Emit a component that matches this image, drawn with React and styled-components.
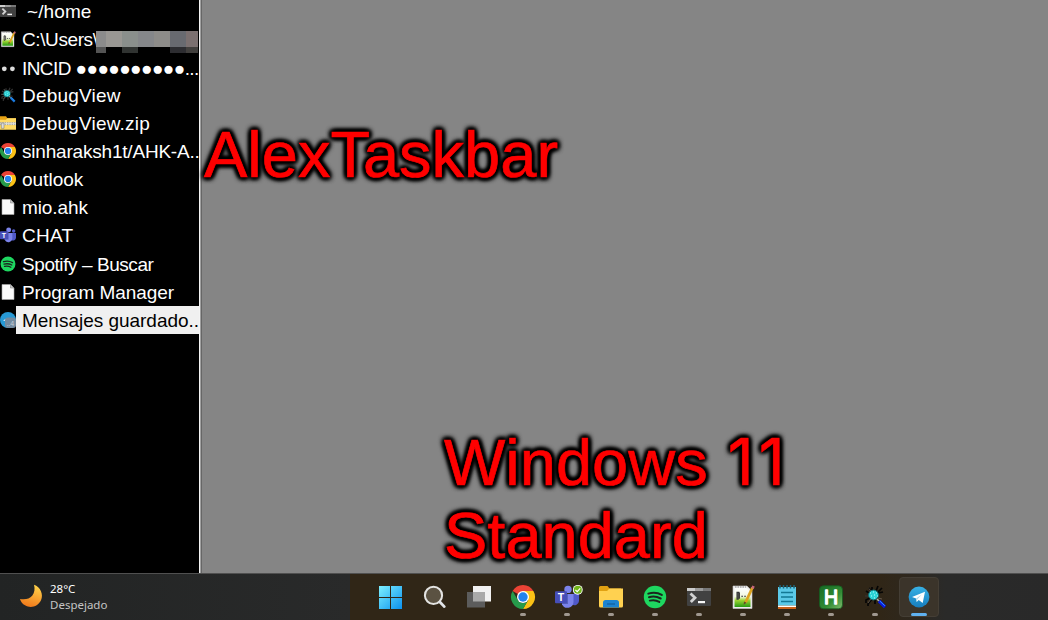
import React from "react";
import styled, { createGlobalStyle } from "styled-components";

const GlobalStyle = createGlobalStyle`
  *, *::before, *::after { box-sizing: border-box; }
  body { margin: 0; background: #858585; overflow: hidden; }
`;

const Desktop = styled.div`
  width: 1048px;
  height: 620px;
  display: flex;
  flex-direction: column;
  overflow: hidden;
  font-family: "Liberation Sans", Arial, sans-serif;
`;

const Workspace = styled.main`
  height: 573px;
  display: flex;
  overflow: hidden;
`;

const Sidebar = styled.nav`
  width: 202px;
  flex: none;
  background: #000;
  border-right: 1px solid #666;
  box-shadow: inset -1px 0 #a0a0a0, inset -2px 0 #f4f4f4;
  padding-right: 2px;
  overflow: hidden;
`;

const WindowList = styled.div`
  margin-top: -3px;
`;

const WindowRow = styled.div`
  height: ${(p) => p.$height || 28}px;
  display: flex;
  align-items: flex-start;
`;

const RowIcon = styled.span`
  width: 16px;
  height: 28px;
  flex: none;
  display: flex;
  align-items: center;
`;

const RowTitle = styled.span`
  flex: 1;
  min-width: 0;
  height: 28px;
  padding-left: ${(p) => p.$indent || 6}px;
  display: flex;
  overflow: hidden;
  white-space: pre;
  font-size: 19px;
  line-height: 29px;
  letter-spacing: ${(p) => p.$tracking || 0}px;
  color: ${(p) => (p.$active ? "#000" : "#fff")};
  background: ${(p) => (p.$active ? "#f0f0f0" : "transparent")};
`;

const Mosaic = styled.span`
  margin-top: 6px;
  margin-left: -2px;
  display: grid;
  grid-template-columns: 10px 16px 16px 16px 16px 16px 12px;
  grid-template-rows: 16px 7px;
  flex: none;
`;

const Tile = styled.span`
  background: ${(p) => p.$color};
`;

const Canvas = styled.section`
  flex: 1;
  min-width: 0;
  background: #858585;
  display: flex;
  flex-direction: column;
  justify-content: space-between;
  padding: 118px 0 1px 2px;
`;

const Caption = styled.h1`
  margin: 0 0 0 ${(p) => p.$left || 0}px;
  width: 380px;
  color: #f00;
  font-size: 65px;
  font-weight: 400;
  line-height: 73px;
  -webkit-text-stroke: 0.7px #f00;
  text-shadow:
    2px 2px 4px #000, -2px 2px 4px #000, 2px -2px 4px #000, -2px -2px 4px #000,
    2px 0 4px #000, -2px 0 4px #000, 0 2px 4px #000, 0 -2px 4px #000,
    0 0 7px #000;
  white-space: nowrap;
`;

const Numeral = styled.span`
  margin-left: 2px;
  font-family: Inter, "Liberation Sans", sans-serif;
  font-size: 64px;
  line-height: 1;
  letter-spacing: 5px;
`;

const Taskbar = styled.footer`
  height: 47px;
  flex: none;
  display: flex;
  border-top: 1px solid #505050;
  background: linear-gradient(90deg, #222424 0, #292a2a 350px, #302617 350px, #302617 880px, #2e281f 915px, #2a2a29 945px, #292929 1048px);
`;

const Weather = styled.div`
  width: 371px;
  flex: none;
  display: flex;
  padding: 7px 0 0 19px;
`;

const WeatherText = styled.div`
  margin-left: 7px;
  font-family: "Noto Sans", sans-serif;
  font-size: 11.5px;
  line-height: 16px;
  color: #c4c4c4;
`;

const Temperature = styled.div`
  color: #fff;
  font-size: 11.5px;
`;

const MoonSlot = styled.div`
  padding-top: 3px;
`;

const Apps = styled.div`
  display: flex;
  gap: 4px;
  padding-top: 3px;
`;

const AppButton = styled.button`
  width: 40px;
  height: 40px;
  padding: 7px 0 0;
  display: flex;
  flex-direction: column;
  align-items: center;
  justify-content: space-between;
  border: 1px solid ${(p) => (p.$active ? "#443e35" : "transparent")};
  border-radius: 4px;
  background: ${(p) => (p.$active ? "#3b342a" : "transparent")};
`;

const Indicator = styled.span`
  width: ${(p) => (p.$active ? 16 : 6)}px;
  height: 3px;
  flex: none;
  border-radius: 2px;
  background: ${(p) => (p.$hidden ? "transparent" : p.$active ? "#60b1f0" : "#a09890")};
`;

const Icon = styled.svg.attrs((p) => ({ viewBox: p.viewBox || "0 0 24 24" }))`
  width: ${(p) => p.$size}px;
  height: ${(p) => p.$size}px;
  flex: none;
  display: block;
  overflow: visible;
`;

const Terminal = ({ size }) => (
  <Icon $size={size}>
    <path d="M0 3h24v17a1 1 0 0 1-1 1H1a1 1 0 0 1-1-1z" fill="#414141" />
    <path d="M0 3h24v3H0z" fill="#777" />
    <path d="M0 3h8v3H0z" fill="#ccc" />
    <path d="M8 3h8v3H8z" fill="#9b9b9b" />
    <path d="M3.5 8.5l4.5 4.2L3.8 17" fill="none" stroke="#d2d2d2" strokeWidth="2.8" />
    <path d="M11 16h7v2.2h-7z" fill="#f6f6f6" />
  </Icon>
);

const NotepadPlus = ({ size }) => (
  <Icon $size={size}>
    <defs>
      <linearGradient id="npp" x1="0" y1="0" x2="0" y2="1">
        <stop offset="0" stopColor="#fff" />
        <stop offset=".45" stopColor="#f1f8df" />
        <stop offset=".65" stopColor="#9dd534" />
        <stop offset="1" stopColor="#269a12" />
      </linearGradient>
    </defs>
    <path d="M2 1h14l5 5v17.5H2z" fill="#eee" stroke="#ccc" strokeWidth=".6" />
    <path d="M3.5 3h12l4 4v15h-16z" fill="url(#npp)" />
    <path d="M4 2h11" stroke="#888" strokeDasharray="1.5 1" />
    <path d="M6 7.2h1.2v7H6zM8.4 7.6v6.2M7 7.4h1.4M10.3 11.2h1.7M13.2 11.2h1.7" fill="none" stroke="#333" strokeWidth="1.1" />
    <path d="M21.5 2.5l-7 15" stroke="#dda320" strokeWidth="2.8" />
    <path d="M22.5 1l-1 2.5" stroke="#c5667c" strokeWidth="2.6" />
    <path d="M15.6 17.8l-2.6-1.2-.4 3.2z" fill="#654c25" />
  </Icon>
);

const TwoDots = ({ size }) => (
  <Icon $size={size} viewBox="0 0 16 16">
    <circle cx="4.3" cy="8.8" r="2.4" fill="#ddd" />
    <circle cx="12.4" cy="8.8" r="2.4" fill="#ddd" />
  </Icon>
);

const Debug = ({ size }) => (
  <Icon $size={size}>
    <path d="M9 8L6 3M9 6V2M13 6l2-5M15 7l4-4M6 8L3 6M6 11H2M7 13l-4 2v3M9 14l-4 5v2M12 15v4M15 8l5-1" fill="none" stroke={size > 18 ? "#050505" : "#343434"} strokeWidth="1.7" />
    <path d="M9 8L6 3.5M6 11H2M8 14l-3 4M15 13l4 1" fill="none" stroke="#7a6e62" strokeWidth=".7" />
    <circle cx="10.5" cy="10" r="4.9" fill="#2cd3d6" stroke="#126e75" />
    <path d="M7 8h1m2-1h1m2 1h1m-6 3h1m2-1h1m2 1h1m-4 2h1" stroke="#b6ffff" strokeWidth="1.2" />
    <path d="M14 14l2 2" stroke="#b7b7ad" strokeWidth="1.6" />
    <path d="M16 16l6 6" stroke={size > 18 ? "#091adf" : "#1673d8"} strokeWidth="3.4" />
    <path d="M16.6 15.8l5.2 5" stroke="#36a6ff" strokeWidth=".9" />
  </Icon>
);

const ZipFolder = ({ size }) => (
  <Icon $size={size}>
    <path d="M0 2h9l2 3h13v5H0z" fill="#e8a315" />
    <path d="M0 7h9l2-2h13v17H0z" fill="#ffda65" />
    <path d="M0 13h24" stroke="#e0e0dc" strokeWidth="4" />
    <path d="M0 11.6h24M0 14.5h24" stroke="#8d8b80" strokeDasharray="2 1.5" />
    <path d="M2 12h4v8H2z" fill="#ddd" stroke="#77756d" strokeWidth=".8" />
  </Icon>
);

const Chrome = ({ size }) => (
  <Icon $size={size}>
    <path d="M12 12L1.6 6A12 12 0 0 1 22.4 6z" fill="#ea4335" />
    <path d="M12 6h10.4A12 12 0 0 1 12 24l5.2-9z" fill="#fbc116" />
    <path d="M1.6 6l5.2 9A6 6 0 0 0 17.2 15L12 24A12 12 0 0 1 1.6 6z" fill="#269b4b" />
    <circle cx="12" cy="12" r="6" fill="#fff" />
    <circle cx="12" cy="12" r="4.7" fill="#2483ee" />
  </Icon>
);

const Page = ({ size }) => (
  <Icon $size={size} viewBox="0 0 16 16">
    <path d="M2 .5h8.5L14 4v11.5H2z" fill="#fafafa" stroke="#aaa" strokeWidth=".6" />
    <path d="M10.5.5V4H14z" fill="#c8c8c8" stroke="#777" strokeWidth=".5" />
  </Icon>
);

const Teams = ({ size, badge }) => (
  <Icon $size={size}>
    <circle cx="20.5" cy="6" r="2.6" fill="#5059c9" />
    <circle cx="13" cy="4.4" r="3.7" fill="#7b83eb" />
    <path d="M17 9h7v7a4.5 4.5 0 0 1-7 3.5z" fill="#5059c9" />
    <path d="M7 9h11.5v8a6 6 0 0 1-11.5 2.2z" fill="#7b83eb" />
    <path d="M7 9h6v10H7z" fill="#5962bc" />
    <rect x="0" y="6.2" width="12" height="12" rx="1" fill="#464eb8" />
    <text x="6" y="15.9" fill="#fff" fontFamily="Liberation Sans, sans-serif" fontWeight="700" fontSize="10.5" textAnchor="middle">T</text>
    {badge && (
      <g>
        <circle cx="22.8" cy="4.8" r="4.9" fill="#fff" />
        <circle cx="22.8" cy="4.8" r="4" fill="#72b51b" />
        <path d="M20.4 4.8l1.8 1.8 3-3.3" fill="none" stroke="#fff" strokeWidth="1.2" />
      </g>
    )}
  </Icon>
);

const Spotify = ({ size }) => (
  <Icon $size={size}>
    <circle cx="12" cy="12" r="11.2" fill="#1ed760" />
    <path d="M5.3 8.6c4.5-1.4 9.6-1 13.5 1.3M6 12.2c4-1.1 8-.7 11.7 1.3M6.8 15.6c3.4-.8 6.6-.5 9.5 1.3" fill="none" stroke="#1b261d" strokeWidth="2" strokeLinecap="round" />
  </Icon>
);

const TelegramBadge = ({ size }) => (
  <Icon $size={size} viewBox="0 0 16 16">
    <circle cx="8" cy="8" r="8" fill="#2799d5" />
    <path d="M3 8.6l3.5-2v2.6z" fill="#eef8ff" />
    <rect x="5" y="5.5" width="11" height="10.5" rx="3" fill="#738ba0" />
    <text x="6.4" y="14" fill="#c4ced6" fontFamily="Liberation Sans, sans-serif" fontSize="7">..4</text>
  </Icon>
);

const Start = ({ size }) => (
  <Icon $size={size}>
    <defs>
      <linearGradient id="start" x1="0" y1="1" x2="23" y2="24" gradientUnits="userSpaceOnUse">
        <stop stopColor="#7df0ff" />
        <stop offset="1" stopColor="#0b91ef" />
      </linearGradient>
    </defs>
    <path d="M0 1h11v11H0zM12 1h11v11H12zM0 13h11v11H0zM12 13h11v11H12z" fill="url(#start)" />
  </Icon>
);

const Search = ({ size }) => (
  <Icon $size={size}>
    <circle cx="10.5" cy="10.4" r="8.6" fill="#5b5242" stroke="#e4e4e2" strokeWidth="2" />
    <path d="M16.9 17l4.4 4.6" stroke="#e2e4e8" strokeWidth="2.8" strokeLinecap="round" />
  </Icon>
);

const TaskView = ({ size }) => (
  <Icon $size={size}>
    <path d="M6 1h18v15.5H6z" fill="#f1f1f1" />
    <path d="M0 7h18v15.5H0z" fill="#5c5c5c" />
    <path d="M6 7h12v9.5H6z" fill="#a9a9a9" />
  </Icon>
);

const Explorer = ({ size }) => (
  <Icon $size={size}>
    <path d="M0 2.5A1.5 1.5 0 0 1 1.5 1h7l2 2.5H22V9H0z" fill="#e1a112" />
    <path d="M0 6h8l2.5-2.4H24V21a1.5 1.5 0 0 1-1.5 1.5h-21A1.5 1.5 0 0 1 0 21z" fill="#ffd150" />
    <path d="M4 22.5v-5A2.5 2.5 0 0 1 6.5 15h11a2.5 2.5 0 0 1 2.5 2.5v5z" fill="#1c83d0" />
    <path d="M8 19h8" stroke="#115e9c" strokeWidth="1.2" />
  </Icon>
);

const Notes = ({ size }) => (
  <Icon $size={size}>
    <path d="M3 19h18v5H3z" fill="#c96119" />
    <path d="M3 20.5h18v1.5H3z" fill="#fff" />
    <path d="M3 2h18v18.5H3z" fill="#5bc9e7" />
    <path d="M5 0v3.5M8.5 0v3.5M12 0v3.5M15.5 0v3.5M19 0v3.5" stroke="#1c6578" strokeWidth="1.5" />
    <path d="M6 7.5h12M6 12h12M6 16.5h12" stroke="#137894" strokeWidth="1.6" />
  </Icon>
);

const AutoHotkey = ({ size }) => (
  <Icon $size={size}>
    <defs>
      <linearGradient id="ahk" x1="0" y1="0" x2="1" y2="1">
        <stop stopColor="#176b25" />
        <stop offset=".6" stopColor="#318b34" />
        <stop offset="1" stopColor="#80bc6d" />
      </linearGradient>
    </defs>
    <rect x=".5" y=".8" width="23" height="23" rx="4" fill="url(#ahk)" stroke="#145d20" strokeWidth=".8" />
    <text x="12" y="19.3" fill="#fff" stroke="#fff" strokeWidth="1.3" strokeLinejoin="round" fontFamily="Liberation Sans, sans-serif" fontSize="19.5" textAnchor="middle">H</text>
  </Icon>
);

const Telegram = ({ size }) => (
  <Icon $size={size}>
    <defs>
      <linearGradient id="telegram" x1="0" y1="0" x2="0" y2="1">
        <stop stopColor="#38b1e5" />
        <stop offset="1" stopColor="#177dbe" />
      </linearGradient>
    </defs>
    <circle cx="12" cy="12" r="10.4" fill="url(#telegram)" />
    <path d="M5 12l13-5.2-2.3 11.1-4-2.8-2 2-.6-3.5z" fill="#fff" />
    <path d="M9.1 13.6l5.7-4.2-4.4 4.8-.7 2.9z" fill="#add6e9" />
  </Icon>
);

const Moon = () => (
  <Icon $size={24}>
    <defs>
      <linearGradient id="moon" x1=".7" y1="0" x2=".4" y2="1">
        <stop stopColor="#ffd34b" />
        <stop offset="1" stopColor="#f0791b" />
      </linearGradient>
    </defs>
    <path d="M15 .8C21.5 3 24.7 10.5 22 16.3C19 22.7 11.5 24.6 6 21.3C3.5 19.8 1.8 17.6 1 14.9C6 16 10.5 14.8 13.2 11.7C15.6 8.8 16.1 4.8 15 .8z" fill="url(#moon)" />
  </Icon>
);

const mosaicColors = [
  "#8b8b8b", "#999793", "#8a8f8c", "#85878a", "#8d8c89", "#686a70", "#7b7070",
  "#545454", "transparent", "#303331", "transparent", "transparent", "#2d2d31", "#413f3d",
];

const windows = [
  { title: "~/home", icon: Terminal, indent: 11, tracking: 0.1 },
  { title: "C:\\Users\\", icon: NotepadPlus, height: 29, redacted: true, tracking: -0.4 },
  { title: "INCID ●●●●●●●●●●...", icon: TwoDots, height: 27, tracking: -0.57 },
  { title: "DebugView", icon: Debug, tracking: 0.2 },
  { title: "DebugView.zip", icon: ZipFolder, tracking: 0.2 },
  { title: "sinharaksh1t/AHK-A..", icon: Chrome, tracking: -0.2 },
  { title: "outlook", icon: Chrome },
  { title: "mio.ahk", icon: Page, tracking: -0.1 },
  { title: "CHAT", icon: Teams, height: 29, tracking: 0.3 },
  { title: "Spotify – Buscar", icon: Spotify, tracking: -0.43 },
  { title: "Program Manager", icon: Page, tracking: -0.07 },
  { title: "Mensajes guardado..", icon: TelegramBadge, active: true, tracking: -0.02 },
];

const apps = [
  { icon: Start, idle: true },
  { icon: Search, idle: true },
  { icon: TaskView, idle: true },
  { icon: Chrome },
  { icon: Teams, badge: true },
  { icon: Explorer },
  { icon: Spotify },
  { icon: Terminal },
  { icon: NotepadPlus },
  { icon: Notes },
  { icon: AutoHotkey },
  { icon: Debug },
  { icon: Telegram, active: true },
];

export default function App() {
  return (
    <>
      <GlobalStyle />
      <Desktop>
        <Workspace>
          <Sidebar>
            <WindowList>
              {windows.map(({ title, icon: Glyph, ...row }) => (
                <WindowRow key={title} $height={row.height}>
                  <RowIcon><Glyph size={16} /></RowIcon>
                  <RowTitle $active={row.active} $indent={row.indent} $tracking={row.tracking}>
                    {title}
                    {row.redacted && (
                      <Mosaic>
                        {mosaicColors.map((color, i) => <Tile key={i} $color={color} />)}
                      </Mosaic>
                    )}
                  </RowTitle>
                </WindowRow>
              ))}
            </WindowList>
          </Sidebar>
          <Canvas>
            <Caption>AlexTaskbar</Caption>
            <Caption $left={240}>Windows <Numeral>11</Numeral><br />Standard</Caption>
          </Canvas>
        </Workspace>
        <Taskbar>
          <Weather>
            <MoonSlot><Moon /></MoonSlot>
            <WeatherText>
              <Temperature>28°C</Temperature>
              Despejado
            </WeatherText>
          </Weather>
          <Apps>
            {apps.map(({ icon: Glyph, active, idle, badge }, i) => (
              <AppButton key={i} $active={active}>
                <Glyph size={24} badge={badge} />
                <Indicator $active={active} $hidden={idle} />
              </AppButton>
            ))}
          </Apps>
        </Taskbar>
      </Desktop>
    </>
  );
}
